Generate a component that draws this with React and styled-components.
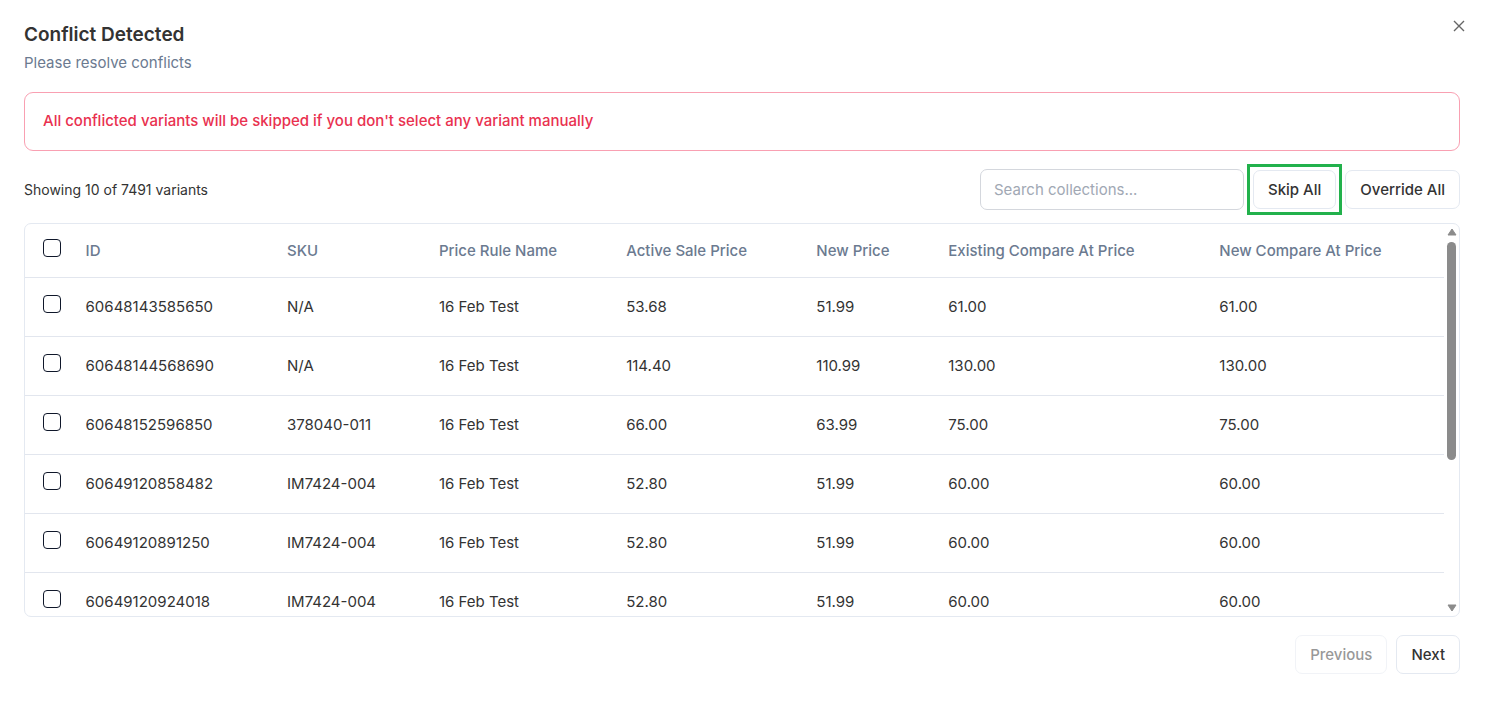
import React, { useState } from "react";
import styled, { createGlobalStyle, css } from "styled-components";

const GlobalStyle = createGlobalStyle`
  * {
    box-sizing: border-box;
  }

  body {
    margin: 0;
    background: #ffffff;
    color: #333333;
    font-family: Inter, "Liberation Sans", sans-serif;
    font-size: 15px;
    line-height: 22px;
  }

  button,
  input {
    font: inherit;
    color: inherit;
  }
`;

const Dialog = styled.main`
  position: relative;
  display: flex;
  flex-direction: column;
  padding: 24px 25px 24px 24px;
`;

const CloseButton = styled.button`
  position: absolute;
  top: 16px;
  right: 16px;
  display: grid;
  place-items: center;
  width: 20px;
  height: 20px;
  padding: 0;
  border: 0;
  background: transparent;
  color: #666666;
  cursor: pointer;
`;

const Title = styled.h1`
  margin: 0;
  font-size: 19px;
  font-weight: 600;
  line-height: 22px;
`;

const Subtitle = styled.p`
  margin: 6px 0 18px;
  color: #6b7a90;
`;

const Alert = styled.div`
  padding: 17px 18px 18px;
  border: 1px solid #f9a0b2;
  border-radius: 9px;
  color: #e9314f;
  font-weight: 500;
`;

const Toolbar = styled.div`
  display: flex;
  align-items: center;
  justify-content: space-between;
  margin: 18px 0 13px;
`;

const Count = styled.span`
  font-size: 14px;
`;

const Actions = styled.div`
  display: flex;
  align-items: center;
  gap: 9px;
`;

const Search = styled.input`
  width: 264px;
  height: 41px;
  padding: 0 13px;
  border: 1px solid #d4d7dd;
  border-radius: 7px;
  background: #ffffff;

  &::placeholder {
    color: #a1a8b4;
    opacity: 1;
  }
`;

const Button = styled.button`
  position: relative;
  height: 39px;
  padding: 0 14px;
  border: 1px solid #e4e9f1;
  border-radius: 7px;
  background: #ffffff;
  font-weight: 500;
  white-space: nowrap;
  cursor: pointer;

  &:disabled {
    opacity: 0.5;
    cursor: default;
  }

  ${({ $marked }) =>
    $marked &&
    css`
      &::after {
        content: "";
        position: absolute;
        inset: -7px;
        border: 3px solid #22b14c;
        pointer-events: none;
      }
    `}
`;

const Panel = styled.section`
  display: flex;
  max-height: 394px;
  border: 1px solid #e4e9f1;
  border-radius: 7px;
  overflow: hidden;
`;

const TableArea = styled.div`
  flex: 1;
  min-width: 0;
  overflow: hidden;
`;

const Table = styled.table`
  width: 100%;
  table-layout: fixed;
  border-collapse: separate;
  border-spacing: 0;
`;

const Col = styled.col`
  width: ${({ $width }) => $width};
`;

const cell = css`
  padding: 0 0 0 18px;
  border-bottom: 1px solid #e2e6ee;
  text-align: left;
  white-space: nowrap;
`;

const Th = styled.th`
  ${cell}
  height: 54px;
  color: #6b7a90;
  font-weight: 500;
`;

const Td = styled.td`
  ${cell}
  height: 59px;
`;

const Checkbox = styled.input`
  display: block;
  appearance: none;
  width: 18px;
  height: 18px;
  margin: 0 0 6px;
  border: 1px solid #0f172a;
  border-radius: 4px;
  background: #ffffff;
  cursor: pointer;

  &:checked {
    background: #0f172a;
  }
`;

const Rail = styled.div`
  display: flex;
  flex-direction: column;
  align-items: center;
  justify-content: space-between;
  width: 15px;
  padding: 4px 0;
`;

const Track = styled.div`
  flex: 1;
  width: 9px;
  margin: 6px 0 5px;
`;

const Thumb = styled.div`
  height: 61%;
  border-radius: 5px;
  background: #8b8b8b;
`;

const Footer = styled.footer`
  display: flex;
  justify-content: flex-end;
  gap: 9px;
  margin-top: 18px;
`;

const columns = [
  { label: "ID", width: "14.2%" },
  { label: "SKU", width: "10.7%" },
  { label: "Price Rule Name", width: "13.2%" },
  { label: "Active Sale Price", width: "13.4%" },
  { label: "New Price", width: "9.3%" },
  { label: "Existing Compare At Price", width: "19.1%" },
  { label: "New Compare At Price", width: "17.1%" },
];

const variants = [
  ["60648143585650", "N/A", "16 Feb Test", "53.68", "51.99", "61.00", "61.00"],
  ["60648144568690", "N/A", "16 Feb Test", "114.40", "110.99", "130.00", "130.00"],
  ["60648152596850", "378040-011", "16 Feb Test", "66.00", "63.99", "75.00", "75.00"],
  ["60649120858482", "IM7424-004", "16 Feb Test", "52.80", "51.99", "60.00", "60.00"],
  ["60649120891250", "IM7424-004", "16 Feb Test", "52.80", "51.99", "60.00", "60.00"],
  ["60649120924018", "IM7424-004", "16 Feb Test", "52.80", "51.99", "60.00", "60.00"],
];

function Arrow({ down }) {
  return (
    <svg width="10" height="8" viewBox="0 0 10 8" aria-hidden="true">
      <path
        d={down ? "M1 1h8L5 7z" : "M1 7h8L5 1z"}
        fill="#8b8b8b"
        stroke="#8b8b8b"
        strokeLinejoin="round"
      />
    </svg>
  );
}

function App() {
  const [selected, setSelected] = useState([]);
  const allSelected = selected.length === variants.length;

  const toggleAll = () =>
    setSelected(allSelected ? [] : variants.map(([id]) => id));

  const toggle = (id) =>
    setSelected((prev) =>
      prev.includes(id) ? prev.filter((el) => el !== id) : [...prev, id]
    );

  return (
    <>
      <GlobalStyle />
      <Dialog>
        <CloseButton type="button" aria-label="Close">
          <svg width="12" height="12" viewBox="0 0 12 12" aria-hidden="true">
            <path
              d="M1 1l10 10M11 1L1 11"
              fill="none"
              stroke="currentColor"
              strokeWidth="1.4"
            />
          </svg>
        </CloseButton>
        <Title>Conflict Detected</Title>
        <Subtitle>Please resolve conflicts</Subtitle>
        <Alert role="alert">
          All conflicted variants will be skipped if you don't select any
          variant manually
        </Alert>
        <Toolbar>
          <Count>Showing 10 of 7491 variants</Count>
          <Actions>
            <Search
              type="text"
              placeholder="Search collections..."
              aria-label="Search collections"
            />
            <Button type="button" $marked>
              Skip All
            </Button>
            <Button type="button">Override All</Button>
          </Actions>
        </Toolbar>
        <Panel>
          <TableArea>
            <Table>
              <colgroup>
                <Col $width="3%" />
                {columns.map((col) => (
                  <Col key={col.label} $width={col.width} />
                ))}
              </colgroup>
              <thead>
                <tr>
                  <Th>
                    <Checkbox
                      type="checkbox"
                      aria-label="Select all"
                      checked={allSelected}
                      onChange={toggleAll}
                    />
                  </Th>
                  {columns.map((col) => (
                    <Th key={col.label} scope="col">
                      {col.label}
                    </Th>
                  ))}
                </tr>
              </thead>
              <tbody>
                {variants.map((row) => (
                  <tr key={row[0]}>
                    <Td>
                      <Checkbox
                        type="checkbox"
                        aria-label={`Select ${row[0]}`}
                        checked={selected.includes(row[0])}
                        onChange={() => toggle(row[0])}
                      />
                    </Td>
                    {row.map((value, index) => (
                      <Td key={index}>{value}</Td>
                    ))}
                  </tr>
                ))}
              </tbody>
            </Table>
          </TableArea>
          <Rail>
            <Arrow />
            <Track>
              <Thumb />
            </Track>
            <Arrow down />
          </Rail>
        </Panel>
        <Footer>
          <Button type="button" disabled>
            Previous
          </Button>
          <Button type="button">Next</Button>
        </Footer>
      </Dialog>
    </>
  );
}

export default App;
